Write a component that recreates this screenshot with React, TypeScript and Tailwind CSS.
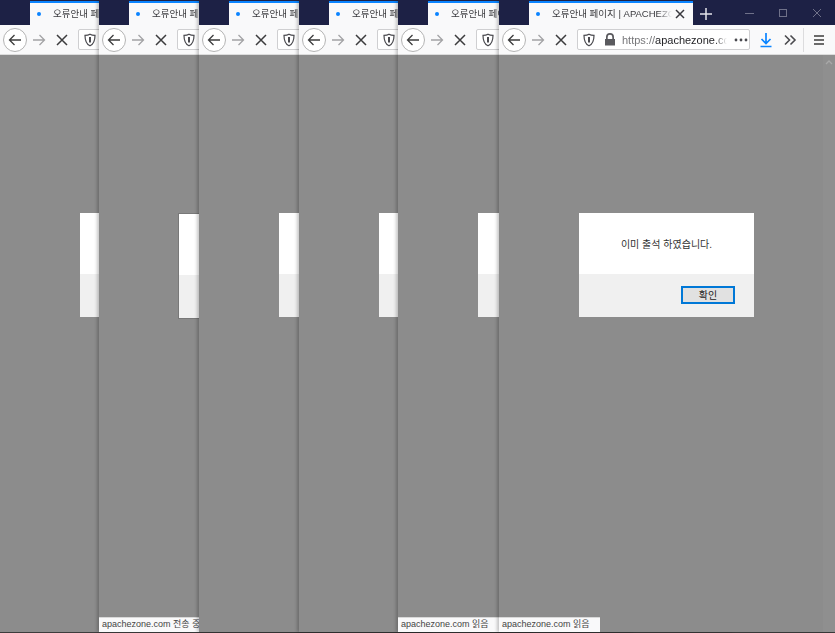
import React from "react";

const font = { fontFamily: '"Liberation Sans", "Noto Sans CJK KR", sans-serif' };

function Toolbar({ full }: { full: boolean }) {
  return (
    <div className="flex h-[30px] shrink-0 items-center border-b border-[#dcdcdc] bg-[#f9f9fa]">
      <div className="ml-[3px] flex h-[24px] w-[24px] shrink-0 items-center justify-center rounded-full border border-[#b4b4b4] bg-white">
        <svg width="16" height="16" viewBox="0 0 16 16" fill="none" stroke="#3c3c3d" strokeWidth="1.3"><path d="M14 8H2.5M7.5 3 2.5 8l5 5" /></svg>
      </div>
      <svg className="ml-[4px] shrink-0" width="16" height="16" viewBox="0 0 16 16" fill="none" stroke="#a3a3a5" strokeWidth="1.3"><path d="M2 8h11.5M8.5 3l5 5-5 5" /></svg>
      <svg className="ml-[7px] shrink-0" width="16" height="16" viewBox="0 0 16 16" fill="none" stroke="#3c3c3d" strokeWidth="1.5"><path d="M3 3l10 10M13 3 3 13" /></svg>
      <div className="ml-[8px] flex h-[21px] w-[173px] shrink-0 items-center rounded-[2px] border border-[#cfcfd1] bg-white">
        <svg className="ml-[4px] shrink-0" width="14" height="14" viewBox="0 0 14 14" fill="none" stroke="#4a4a4f" strokeWidth="1.2"><path d="M7 1.2c1.600 1 3.400 1.200 5 1.200 0 5-1.400 8.600-5 10.400C3.400 11 2 7.400 2 2.400c1.600 0 3.400-.2 5-1.200Z" /><path d="M7 4v5.500" strokeWidth="2" /></svg>
        {full && (
          <svg className="ml-[8px] shrink-0" width="12" height="13" viewBox="0 0 12 13" fill="#5a5a5e"><path d="M2 6V4a4 4 0 0 1 8 0v2h1v6.500H1V6Zm1.700 0h4.600V4a2.300 2.300 0 0 0-4.600 0Z" /></svg>
        )}
        {full && (
          <span className="ml-[6px] w-[105px] shrink-0 overflow-hidden whitespace-nowrap text-[11px] leading-[16px] text-[#77777a] [mask-image:linear-gradient(to_right,black_88%,transparent)]" style={font}>
            https://<span className="text-[#1f1f22]">apachezone.com</span>
          </span>
        )}
        {full && (
          <svg className="ml-[7px] shrink-0" width="14" height="4" viewBox="0 0 14 4" fill="#4a4a4f"><circle cx="2" cy="2" r="1.400" /><circle cx="7" cy="2" r="1.400" /><circle cx="12" cy="2" r="1.400" /></svg>
        )}
      </div>
      {full && (
        <>
          <svg className="ml-[9px] shrink-0" width="14" height="16" viewBox="0 0 14 16" fill="none" stroke="#0a84ff" strokeWidth="1.700"><path d="M7 1v10M2.500 7 7 11.500 11.500 7M1.500 14.500h11" /></svg>
          <svg className="ml-[10px] shrink-0" width="14" height="14" viewBox="0 0 14 14" fill="none" stroke="#4a4a4f" strokeWidth="1.600"><path d="M2 2.500 6.500 7 2 11.500M7.500 2.500 12 7l-4.500 4.500" /></svg>
          <div className="ml-[6px] h-[24px] w-px shrink-0 bg-[#dcdcde]" />
          <svg className="ml-[9px] shrink-0" width="12" height="12" viewBox="0 0 12 12" fill="none" stroke="#3c3c3d" strokeWidth="1.500"><path d="M1 2h10M1 6h10M1 10h10" /></svg>
        </>
      )}
    </div>
  );
}

function TabBar({ full }: { full: boolean }) {
  return (
    <div className="flex h-[25px] shrink-0 items-end bg-[#1d2145]">
      <div className="ml-[30px] flex h-[24px] w-[164px] shrink-0 items-center border-t-2 border-[#0a84ff] bg-[#f9f9fa]">
        <div className="ml-[7px] h-[4px] w-[4px] shrink-0 rounded-full bg-[#0a84ff]" />
        <span className="ml-[12px] w-[120px] shrink-0 overflow-hidden whitespace-nowrap text-[9.5px] leading-[14px] text-[#3a3a3e] [mask-image:linear-gradient(to_right,black_88%,transparent)]" style={font}>
          오류안내 페이지 | APACHEZONE
        </span>
        <svg className="ml-[3px] shrink-0" width="10" height="10" viewBox="0 0 10 10" fill="none" stroke="#38383d" strokeWidth="1.500"><path d="M1 1l8 8M9 1 1 9" /></svg>
      </div>
      {full && (
        <>
          <svg className="mb-[5px] ml-[7px] shrink-0" width="12" height="12" viewBox="0 0 12 12" fill="none" stroke="#e4e4ea" strokeWidth="1.500"><path d="M6 0v12M0 6h12" /></svg>
          <div className="mb-[11px] ml-[33px] h-px w-[9px] shrink-0 bg-[#6f7189]" />
          <div className="mb-[8px] ml-[25px] h-[8px] w-[8px] shrink-0 border border-[#6f7189]" />
          <svg className="mb-[7px] ml-[25px] shrink-0" width="10" height="10" viewBox="0 0 10 10" fill="none" stroke="#6f7189" strokeWidth="1"><path d="M1 1l8 8M9 1 1 9" /></svg>
        </>
      )}
    </div>
  );
}

function Dialog({ low, full }: { low: boolean; full: boolean }) {
  return (
    <div className={`ml-[80px] flex h-[104px] w-[175px] shrink-0 flex-col ${low ? "mt-[159px] outline outline-1 outline-[#787878]" : "mt-[158px]"}`}>
      <div className="flex h-[61px] items-center justify-center bg-white pt-[1px] text-[10px] text-[#333333]" style={font}>
        {full ? "이미 출석 하였습니다." : ""}
      </div>
      <div className="flex h-[43px] items-start justify-end bg-[#f0f0f0] pr-[19px] pt-[12px]">
        {full && (
          <div className="flex h-[18px] w-[54px] items-center justify-center border-2 border-[#0078d7] bg-[#e1e1e1] text-[10px] text-[#222222]" style={font}>
            확인
          </div>
        )}
      </div>
    </div>
  );
}

const windows = [
  { cls: "left-0", low: false, status: "" },
  { cls: "left-[99px]", low: true, status: "apachezone.com 전송 중" },
  { cls: "left-[199px]", low: false, status: "" },
  { cls: "left-[299px]", low: false, status: "" },
  { cls: "left-[398px]", low: false, status: "apachezone.com 읽음" },
  { cls: "left-[499px]", low: false, status: "apachezone.com 읽음" },
];

export default function App() {
  return (
    <div className="relative h-[633px] w-[835px] overflow-hidden bg-[#3c3c3c]">
      {windows.map((w, i) => {
        const full = i === windows.length - 1;
        return (
          <div key={i} className={`absolute top-0 flex h-[632px] w-[336px] flex-col overflow-hidden bg-[#8c8c8c] ${w.cls} ${i > 0 ? "shadow-[-2px_0_3px_rgba(0,0,0,0.22)]" : ""}`}>
            <TabBar full={full} />
            <Toolbar full={full} />
            <div className="relative flex min-h-0 flex-1 flex-col">
              <Dialog low={w.low} full={full} />
              {w.status && (
                <div className="absolute bottom-0 left-0 flex h-[15px] w-[101px] items-center overflow-hidden whitespace-nowrap border-t border-[#d8d8d8] bg-[#f9f9fa] pl-[3px] text-[9px] text-[#444444]" style={font}>
                  {w.status}
                </div>
              )}
              {full && (
                <div className="absolute bottom-0 right-0 top-0 flex w-[12px] justify-center bg-[#8f8f8f] pt-[4px]">
                  <svg width="8" height="6" viewBox="0 0 8 6" fill="none" stroke="#a8a8a8" strokeWidth="1.300"><path d="M1 5l3-3 3 3" /></svg>
                </div>
              )}
            </div>
          </div>
        );
      })}
    </div>
  );
}
